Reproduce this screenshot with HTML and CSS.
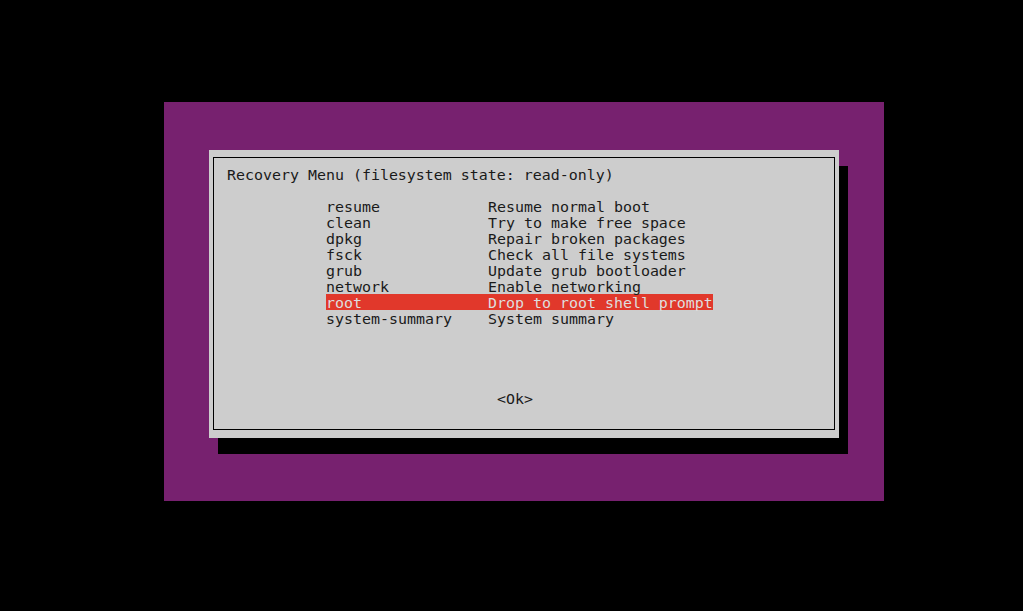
FILE: index.html
```html
<!DOCTYPE html>
<html lang="en">
<head>
    <meta charset="UTF-8">
    <title>Recovery Menu</title>
    <link rel="stylesheet" href="styles.css">
</head>
<body>
    <div class="screen">
        <div class="dialog">
            <div class="frame">
                <div class="row">Recovery Menu (filesystem state: read-only)</div>
                <div class="menu">
                    <div class="item"><span class="key">resume</span><span>Resume normal boot</span></div>
                    <div class="item"><span class="key">clean</span><span>Try to make free space</span></div>
                    <div class="item"><span class="key">dpkg</span><span>Repair broken packages</span></div>
                    <div class="item"><span class="key">fsck</span><span>Check all file systems</span></div>
                    <div class="item"><span class="key">grub</span><span>Update grub bootloader</span></div>
                    <div class="item"><span class="key">network</span><span>Enable networking</span></div>
                    <div class="item selected"><span class="key">root</span><span>Drop to root shell prompt</span></div>
                    <div class="item"><span class="key">system-summary</span><span>System summary</span></div>
                </div>
                <div class="row ok">&lt;Ok&gt;</div>
            </div>
        </div>
    </div>
</body>
</html>
```

FILE: styles.css
```css
html, body {
    background: #000;
}
body {
    margin: 0;
    padding: 102px 0 0 164px;
    height: 611px;
    box-sizing: border-box;
    overflow: hidden;
    font-family: "DejaVu Sans Mono", monospace;
    font-size: 14.95px;
    color: #1a1a1a;
}
.screen {
    width: 720px;
    height: 399px;
    background: #77216f;
    padding: 48px 0 0 45px;
    box-sizing: border-box;
}
.dialog {
    width: 630px;
    height: 288px;
    background: #cdcdcd;
    box-shadow: 9px 16px 0 #000;
    padding: 7px 4px 8px 4px;
    box-sizing: border-box;
}
.frame {
    height: 100%;
    border: 1px solid #000;
    box-sizing: border-box;
    padding: 8px 0 0 13px;
}
.row, .item {
    height: 16px;
    line-height: 18px;
    white-space: pre;
}
.menu {
    margin: 16px 0 0 99px;
}
.item {
    display: flex;
    width: 387px;
}
.key {
    width: 162px;
    flex-shrink: 0;
}
.selected {
    background: #e1382b;
    color: #dedede;
}
.ok {
    margin: 64px 0 0 270px;
}
```
